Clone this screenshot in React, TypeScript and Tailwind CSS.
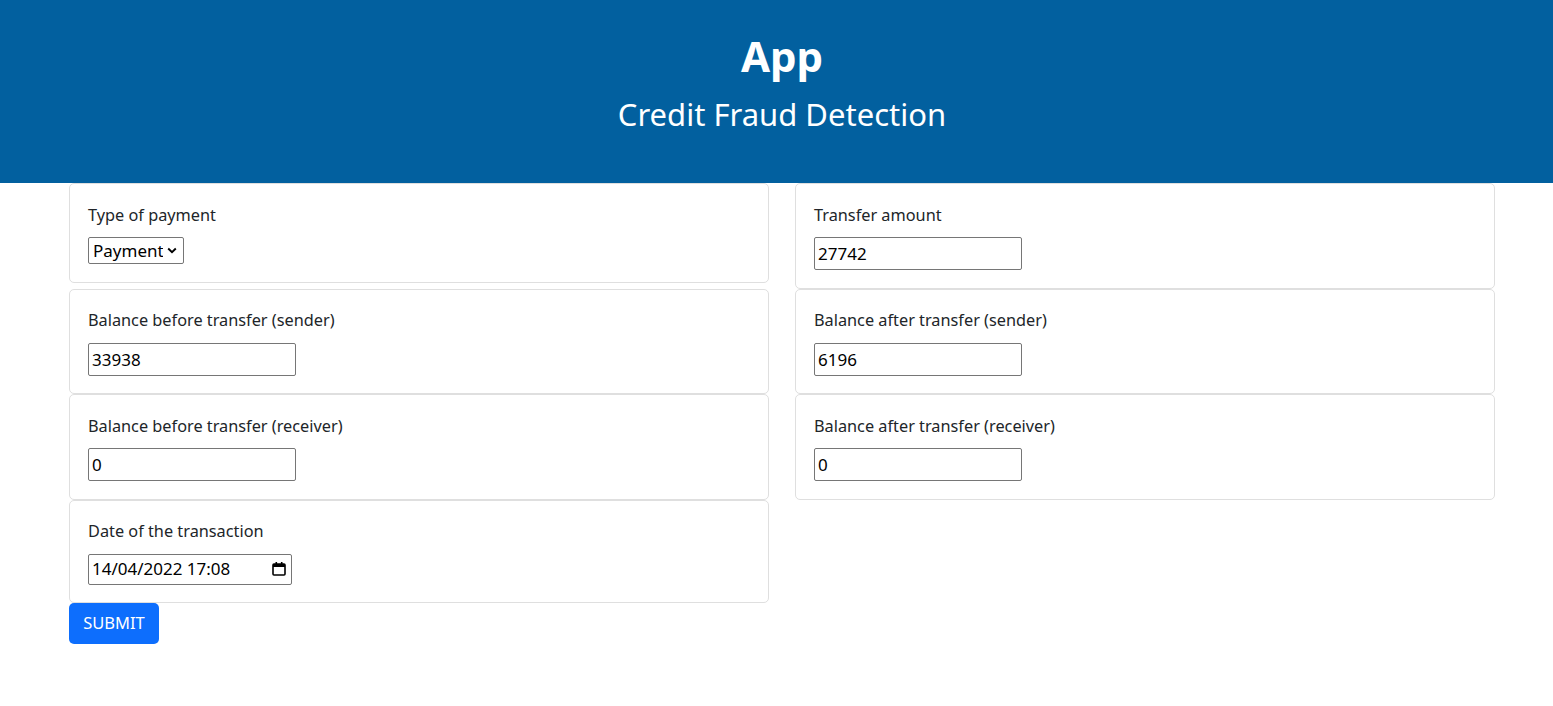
import React from "react";

const font = { fontFamily: '"Noto Sans", "Open Sans", sans-serif' };

function Card({ label, children }: { label: string; children: React.ReactNode }) {
  return (
    <div className="border border-[#dfdfdf] rounded-[5px] bg-white pt-[18.5px] pb-[17.5px] pl-[18px] pr-[18px]">
      <div className="text-[16.3px] leading-[24px] text-[#212529]">{label}</div>
      <div className="mt-[10.5px]">{children}</div>
    </div>
  );
}

function TextInput({ value }: { value: string }) {
  return (
    <input
      readOnly
      value={value}
      className="block w-[208px] h-[33px] border border-[#767676] rounded-[2px] px-[3px] text-[17px] text-black bg-white outline-none"
      style={font}
    />
  );
}

export default function App() {
  return (
    <div className="min-h-[706px] bg-white" style={font}>
      <header className="bg-[#02609f] h-[183px] flex flex-col items-center text-white pl-[11px]">
        <h1 className="text-[42px] font-bold leading-[48px] mt-[32px]">App</h1>
        <h2 className="text-[31px] leading-[40px] mt-[14px]">Credit Fraud Detection</h2>
      </header>
      <div className="ml-[69px] w-[1426px]">
        <div className="grid grid-cols-[700px_700px] gap-x-[26px] items-start">
          <Card label="Type of payment">
            <div className="relative w-[96px] h-[27px] border border-[#767676] rounded-[2px] bg-white flex items-center">
              <select
                className="appearance-none w-full h-full bg-transparent pl-[4px] pr-[20px] text-[17px] text-black outline-none"
                style={font}
                defaultValue="Payment"
              >
                <option>Payment</option>
                <option>Transfer</option>
                <option>Cash out</option>
                <option>Debit</option>
                <option>Cash in</option>
              </select>
              <svg className="absolute right-[6px] top-[9px] pointer-events-none" width="10" height="7" viewBox="0 0 10 7">
                <path d="M1.2 1.5 L5 5.2 L8.8 1.5" fill="none" stroke="#000" strokeWidth="1.9" />
              </svg>
            </div>
          </Card>
          <Card label="Transfer amount">
            <TextInput value="27742" />
          </Card>
          <Card label="Balance before transfer (sender)">
            <TextInput value="33938" />
          </Card>
          <Card label="Balance after transfer (sender)">
            <TextInput value="6196" />
          </Card>
          <Card label="Balance before transfer (receiver)">
            <TextInput value="0" />
          </Card>
          <Card label="Balance after transfer (receiver)">
            <TextInput value="0" />
          </Card>
          <Card label="Date of the transaction">
            <div className="w-[204px] h-[31px] border border-[#767676] rounded-[2px] bg-white flex items-center pl-[3px] pr-[4px]">
              <input
                readOnly
                value="14/04/2022 17:08"
                className="flex-1 min-w-0 bg-transparent text-[17px] text-black outline-none"
                style={font}
              />
              <svg width="16" height="16" viewBox="0 0 16 16">
                <rect x="2" y="3" width="12" height="11" rx="1" fill="none" stroke="#000" strokeWidth="1.6" />
                <rect x="2" y="3" width="12" height="3" fill="#000" />
                <rect x="4.5" y="1" width="1.6" height="3" fill="#000" />
                <rect x="9.9" y="1" width="1.6" height="3" fill="#000" />
              </svg>
            </div>
          </Card>
        </div>
        <button className="mt-0 w-[90px] h-[41px] bg-[#0d6efd] text-white text-[16.5px] rounded-[5px]" style={font}>
          SUBMIT
        </button>
      </div>
    </div>
  );
}
